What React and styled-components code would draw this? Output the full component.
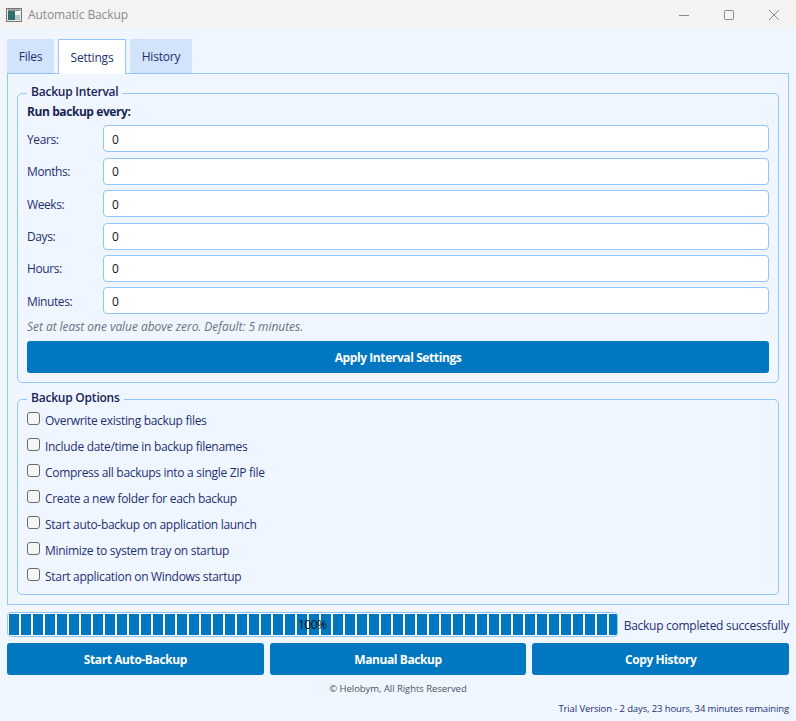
import React from "react";
import styled, { createGlobalStyle } from "styled-components";

const Global = createGlobalStyle`
  html, body { margin: 0; padding: 0; background: #eff6ff; }
  body { font-family: "Open Sans", "Noto Sans", sans-serif; font-size: 12px; color: #1e3070; }
  * { box-sizing: border-box; }
`;

const Win = styled.div`
  width: 796px; height: 721px; display: flex; flex-direction: column; background: #eff6ff; overflow: hidden;
`;
const TitleBar = styled.div`
  height: 29px; flex: none; background: #f3f3f3; display: flex; align-items: center; padding-left: 6px;
`;
const AppIcon = styled.svg`width: 16px; height: 16px; flex: none;`;
const TitleText = styled.span`
  margin-left: 6px; font-size: 12px; letter-spacing: -0.1px; color: #8c8c8c; flex: 1;
`;
const Caption = styled.div`display: flex; align-items: center; padding-right: 0;`;
const CaptionBtn = styled.div`
  width: 45px; height: 29px; display: flex; align-items: center; justify-content: center;
  svg { width: 12px; height: 12px; stroke: #8a8a8a; fill: none; stroke-width: 1; }
`;
const Content = styled.div`
  flex: 1; display: flex; flex-direction: column; padding: 10px 7px 0;
`;
const Tabs = styled.div`display: flex; gap: 4px; height: 34px; position: relative; z-index: 1;`;
const Tab = styled.div`
  height: ${p => (p.$active ? "35px" : "34px")};
  display: flex; align-items: center; justify-content: center;
  width: ${p => p.$w}px;
  font-size: 12px; letter-spacing: -0.2px; color: #1e3070;
  background: ${p => (p.$active ? "#ffffff" : "#d2e3fc")};
  ${p => p.$active ? "border: 1px solid #93c5fd; border-bottom: none;" : ""}
`;
const Pane = styled.div`
  height: 532px; border: 1px solid #93c5fd; background: #f0f6ff; padding: 19px 9px 0;
  display: flex; flex-direction: column; gap: 16px;
`;
const Group = styled.div`
  position: relative; border: 1px solid #93c5fd; border-radius: 5px; height: ${p => p.$h}px;
  padding: ${p => p.$pt}px 9px 0;
  display: flex; flex-direction: column;
`;
const Legend = styled.div`
  position: absolute; top: -11px; left: 9px; padding: 0 4px; background: #f0f6ff;
  font-size: 12px; font-weight: 600; line-height: 17px; letter-spacing: -0.22px; color: #172554;
`;
const RunLabel = styled.div`
  font-size: 12px; font-weight: 700; line-height: 16px; letter-spacing: -0.42px; color: #172554; margin-bottom: 5.4px;
`;
const Fields = styled.div`
  display: grid; grid-template-columns: 76px 1fr; row-gap: 5.4px; align-items: center;
`;
const FieldLabel = styled.div`font-size: 12px; letter-spacing: -0.4px; color: #1e3070; padding-top: 1px;`;
const Input = styled.div`
  height: 27px; background: #fff; border: 1px solid #93c5fd; border-radius: 4px;
  display: flex; align-items: center; padding: 1px 0 0 8px; font-size: 12px; color: #111;
`;
const Hint = styled.div`
  margin-top: 5px; font-size: 12px; font-style: italic; letter-spacing: -0.05px; line-height: 15px; color: #6b7280;
`;
const Primary = styled.div`
  background: #0077c0; color: #fff; border-radius: 3px; font-weight: 700; font-size: 12px; letter-spacing: -0.4px;
  display: flex; align-items: center; justify-content: center;
  height: ${p => p.$h}px;
  margin-top: ${p => p.$mt || 0}px;
  flex: ${p => (p.$grow ? "1" : "none")};
`;
const Checks = styled.div`display: flex; flex-direction: column; gap: 8px;`;
const CheckRow = styled.label`
  display: flex; align-items: center; gap: 5px; height: 18px;
  font-size: 12px; letter-spacing: -0.3px; color: #1e3070;
`;
const Box = styled.span`
  width: 13px; height: 13px; flex: none; border: 1px solid #6b6b6b; border-radius: 3px; background: #f6f6f6; margin-top: -3px;
`;
const ProgressRow = styled.div`
  margin-top: 7px; height: 25px; display: flex; align-items: center; gap: 6px;
`;
const Progress = styled.div`
  position: relative; width: 611px; height: 25px; border: 1px solid #93c5fd; border-radius: 4px; background: #fff;
  padding: 1px; display: flex; gap: 2px; overflow: hidden;
`;
const Chunk = styled.div`width: 10px; flex: none; background: #0077c0;`;
const Pct = styled.span`
  position: absolute; left: 290px; top: 3px; font-size: 12px; letter-spacing: -0.5px; color: #111;
`;
const Status = styled.div`font-size: 12px; letter-spacing: -0.27px; color: #1e3070; white-space: nowrap; margin-top: 1px;`;
const Buttons = styled.div`margin-top: 6px; display: flex; gap: 6px;`;
const Copyright = styled.div`
  margin-top: 6px; text-align: center; font-size: 9.5px; line-height: 16px; color: #4b5563; letter-spacing: -0.05px;
`;
const Trial = styled.div`
  margin-top: 5px; text-align: right; font-size: 9.5px; line-height: 14px; letter-spacing: -0.12px; color: #1e3070;
`;

const fields = ["Years:", "Months:", "Weeks:", "Days:", "Hours:", "Minutes:"];
const options = [
  "Overwrite existing backup files",
  "Include date/time in backup filenames",
  "Compress all backups into a single ZIP file",
  "Create a new folder for each backup",
  "Start auto-backup on application launch",
  "Minimize to system tray on startup",
  "Start application on Windows startup",
];

export default function App() {
  return (
    <Win>
      <Global />
      <TitleBar>
        <AppIcon viewBox="0 0 16 16">
          <rect x="0.5" y="1.5" width="15" height="13" fill="#e5e5e5" stroke="#777" />
          <rect x="2" y="4" width="7" height="9" fill="#2f6f6a" />
          <rect x="9" y="4" width="5" height="4" fill="#f4f4f4" />
          <rect x="9" y="8" width="5" height="5" fill="#b9c3cc" />
          <rect x="2" y="2.5" width="12" height="1.2" fill="#666" />
        </AppIcon>
        <TitleText>Automatic Backup</TitleText>
        <Caption>
          <CaptionBtn><svg viewBox="0 0 12 12"><path d="M1 6.5h10" /></svg></CaptionBtn>
          <CaptionBtn><svg viewBox="0 0 12 12"><rect x="1.5" y="1.5" width="9" height="9" rx="1" /></svg></CaptionBtn>
          <CaptionBtn><svg viewBox="0 0 12 12"><path d="M1 1l10 10M11 1L1 11" /></svg></CaptionBtn>
        </Caption>
      </TitleBar>
      <Content>
        <Tabs>
          <Tab $w={47}>Files</Tab>
          <Tab $w={68} $active>Settings</Tab>
          <Tab $w={62}>History</Tab>
        </Tabs>
        <Pane>
          <Group $h={290} $pt={10}>
            <Legend>Backup Interval</Legend>
            <RunLabel>Run backup every:</RunLabel>
            <Fields>
              {fields.map(f => (
                <React.Fragment key={f}>
                  <FieldLabel>{f}</FieldLabel>
                  <Input>0</Input>
                </React.Fragment>
              ))}
            </Fields>
            <Hint>Set at least one value above zero. Default: 5 minutes.</Hint>
            <Primary $h={32} $mt={7}>Apply Interval Settings</Primary>
          </Group>
          <Group $h={196} $pt={11}>
            <Legend>Backup Options</Legend>
            <Checks>
              {options.map(o => (
                <CheckRow key={o}><Box />{o}</CheckRow>
              ))}
            </Checks>
          </Group>
        </Pane>
        <ProgressRow>
          <Progress>
            {Array.from({ length: 51 }, (_, i) => <Chunk key={i} />)}
            <Pct>100%</Pct>
          </Progress>
          <Status>Backup completed successfully</Status>
        </ProgressRow>
        <Buttons>
          <Primary $h={32} $grow>Start Auto-Backup</Primary>
          <Primary $h={32} $grow>Manual Backup</Primary>
          <Primary $h={32} $grow>Copy History</Primary>
        </Buttons>
        <Copyright>© Helobym, All Rights Reserved</Copyright>
        <Trial>Trial Version - 2 days, 23 hours, 34 minutes remaining</Trial>
      </Content>
    </Win>
  );
}
